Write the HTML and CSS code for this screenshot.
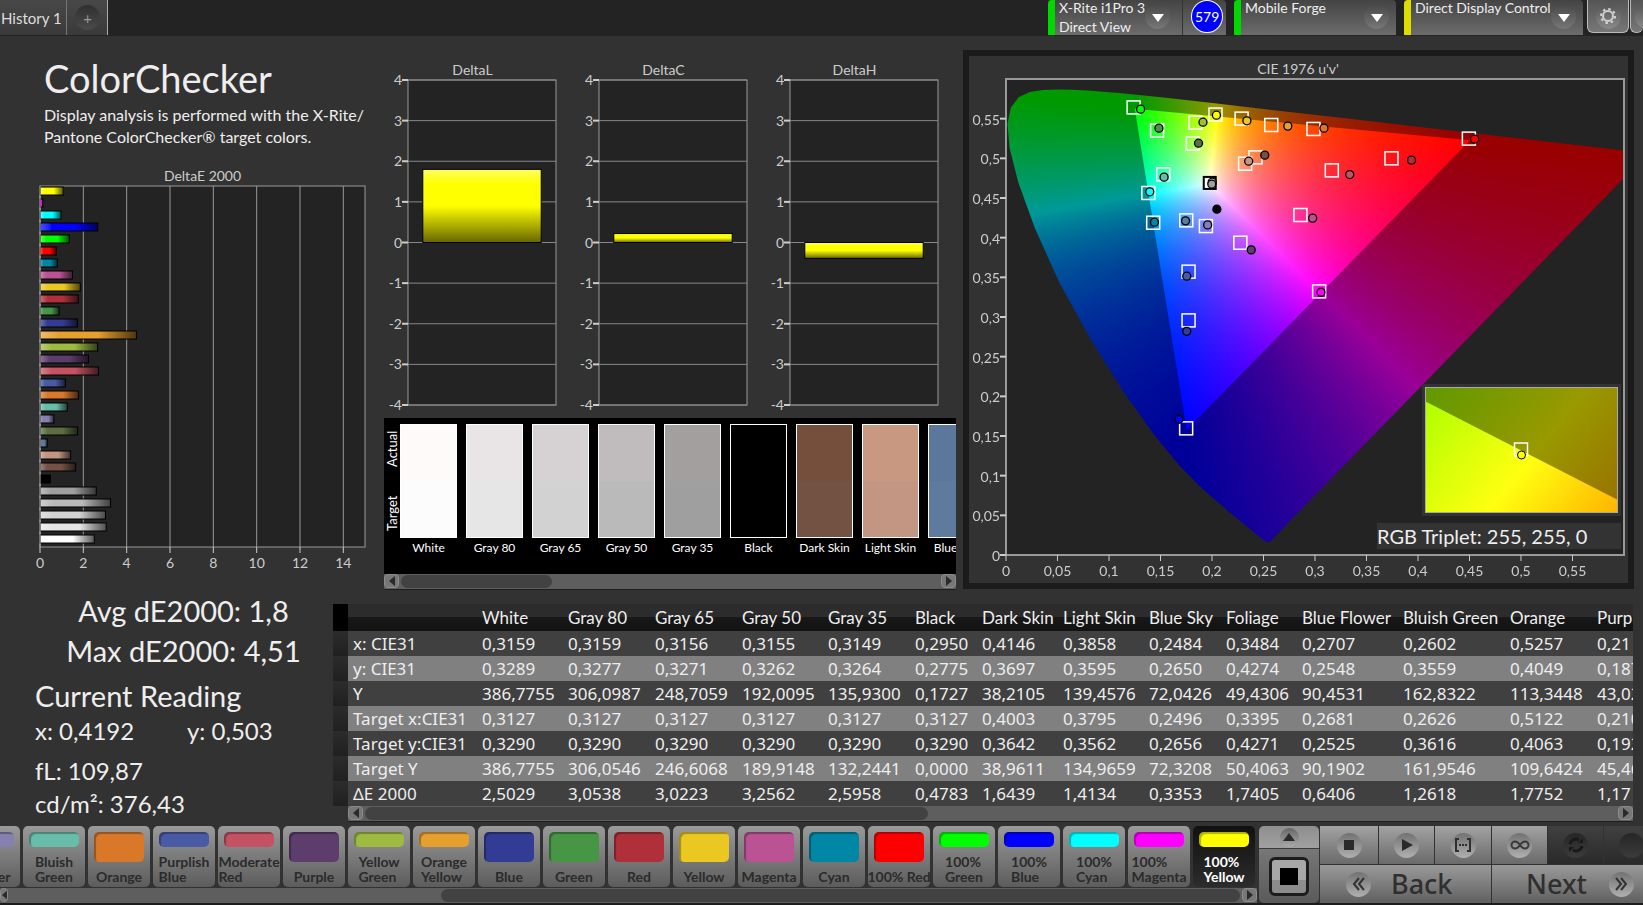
FILE: index.html
```html
<!DOCTYPE html>
<html lang="en">
<head>
    <meta charset="UTF-8">
    <meta name="viewport" content="width=device-width, initial-scale=1.0">
    <title>ColorChecker</title>
    <link rel="stylesheet" href="styles.css">
</head>
<body>

<header class="topbar">
    <nav class="tabs">
        <button class="tab">History 1</button>
        <button class="tab tab-add" aria-label="Add tab"><span class="knob">+</span></button>
    </nav>
    <div class="devices">
        <div class="device meter">
            <button class="device-name" aria-haspopup="menu">X-Rite i1Pro 3<br>Direct View</button>
            <span class="knob"><svg width="14" height="10"><path d="M1 1h12L7 9z" fill="#fff"/></svg></span>
            <div class="count-box"><span class="count">579</span></div>
        </div>
        <div class="device source">
            <select class="device-name" aria-label="Source"><option>Mobile Forge</option></select>
            <span class="knob"><svg width="14" height="10"><path d="M1 1h12L7 9z" fill="#fff"/></svg></span>
        </div>
        <div class="device display">
            <select class="device-name" aria-label="Display"><option>Direct Display Control</option></select>
            <span class="knob"><svg width="14" height="10"><path d="M1 1h12L7 9z" fill="#fff"/></svg></span>
        </div>
        <button class="tool" aria-label="Settings">
            <span class="knob">
                <svg width="18" height="18" viewBox="-9 -9 18 18">
                    <circle r="5" fill="none" stroke="#d0d0d0" stroke-width="2"/>
                    <circle r="7" fill="none" stroke="#d0d0d0" stroke-width="2" stroke-dasharray="2.6 2.9"/>
                </svg>
            </span>
        </button>
        <button class="tool tool-cut" aria-label="More"><span class="knob"></span></button>
    </div>
</header>

<main>
    <div class="charts">
        <section class="left-section">
            <h1>ColorChecker</h1>
            <p class="description">Display analysis is performed with the X-Rite/<br>Pantone ColorChecker® target colors.</p>
            <h2 class="chart-title">DeltaE 2000</h2>
            <svg class="plot delta-e" id="delta-e"></svg>
        </section>

        <section class="middle-section">
            <div class="deltas">
                <div class="delta">
                    <h2 class="chart-title">DeltaL</h2>
                    <svg class="plot delta-plot" data-value="1.8"></svg>
                </div>
                <div class="delta">
                    <h2 class="chart-title">DeltaC</h2>
                    <svg class="plot delta-plot" data-value="0.22"></svg>
                </div>
                <div class="delta">
                    <h2 class="chart-title">DeltaH</h2>
                    <svg class="plot delta-plot" data-value="-0.39"></svg>
                </div>
            </div>

            <div class="swatch-panel">
                <div class="swatches">
                    <div class="side-labels"><span>Target</span><span>Actual</span></div>
                    <div class="swatch-list" id="swatches"></div>
                </div>
                <div class="scrollbar">
                    <button class="arrow" aria-label="Scroll left"><svg width="8" height="10"><path d="M7 0v10L1 5z"/></svg></button>
                    <div class="track"><div class="thumb" style="width: 28%"></div></div>
                    <button class="arrow" aria-label="Scroll right"><svg width="8" height="10"><path d="M1 0v10L7 5z"/></svg></button>
                </div>
            </div>
        </section>

        <section class="cie-panel">
            <h2 class="chart-title">CIE 1976 u'v'</h2>
            <div class="cie-plot">
                <canvas id="cie" width="618" height="476"></canvas>
                <svg class="plot" id="cie-marks"></svg>
                <div class="inset">
                    <div class="inset-view">
                        <div class="inset-gamut"></div>
                        <svg width="100%" height="100%">
                            <svg x="50%" y="50%" overflow="visible">
                                <rect x="-7" y="-7" width="13" height="13" class="target"/>
                                <circle r="4" cy="5" fill="#ffff00" stroke="#000"/>
                            </svg>
                        </svg>
                    </div>
                </div>
                <div class="triplet">RGB Triplet: 255, 255, 0</div>
            </div>
        </section>
    </div>

    <div class="readings">
        <section class="stats">
            <div class="summary">Avg dE2000: 1,8</div>
            <div class="summary">Max dE2000: 4,51</div>
            <h2>Current Reading</h2>
            <div class="xy"><span>x: 0,4192</span><span>y: 0,503</span></div>
            <div class="luminance">fL: 109,87</div>
            <div class="candela">cd/m²: 376,43</div>
        </section>

        <section class="table-section">
            <div class="table-box">
                <table>
                    <colgroup>
                        <col style="width: 15px"><col style="width: 129px">
                        <col style="width: 86px"><col style="width: 87px"><col style="width: 87px"><col style="width: 86px">
                        <col style="width: 87px"><col style="width: 67px"><col style="width: 81px"><col style="width: 86px">
                        <col style="width: 77px"><col style="width: 76px"><col style="width: 101px"><col style="width: 107px">
                        <col style="width: 87px"><col>
                    </colgroup>
                    <thead id="table-head"></thead>
                    <tbody id="table-body"></tbody>
                </table>
            </div>
            <div class="scrollbar">
                <button class="arrow" aria-label="Scroll left"><svg width="8" height="10"><path d="M7 0v10L1 5z"/></svg></button>
                <div class="track"><div class="thumb" style="width: 45%"></div></div>
                <button class="arrow" aria-label="Scroll right"><svg width="8" height="10"><path d="M1 0v10L7 5z"/></svg></button>
            </div>
        </section>
    </div>
</main>

<footer class="bottombar">
    <div class="patches">
        <div class="patch-list" id="patches"></div>
        <div class="scrollbar">
            <button class="arrow arrow-cut" aria-label="Scroll left"><svg width="8" height="10"><path d="M7 0v10L1 5z"/></svg></button>
            <div class="track track-end"><div class="thumb" style="width: 65%"></div></div>
            <button class="arrow" aria-label="Scroll right"><svg width="8" height="10"><path d="M1 0v10L7 5z"/></svg></button>
        </div>
    </div>

    <div class="window-buttons">
        <button class="up" aria-label="Expand"><span class="knob"><svg width="12" height="8"><path d="M0 8h12L6 0z" fill="#2a2a2a"/></svg></span></button>
        <button class="window" aria-label="Pattern window"><span class="window-frame"><span class="window-dot"></span></span></button>
    </div>

    <div class="transport">
        <button aria-label="Stop"><span class="knob"><svg width="12" height="12"><path d="M1 1h10v10H1z"/></svg></span></button>
        <button aria-label="Play"><span class="knob"><svg width="12" height="14"><path d="M1 1l11 6-11 6z"/></svg></span></button>
        <button aria-label="Read series">
            <span class="knob">
                <svg width="18" height="14" fill="none" stroke="#2f2f2f" stroke-width="2">
                    <path d="M5 1H2v12h3M13 1h3v12h-3"/>
                    <path d="M5 7h9" stroke-dasharray="2 1"/>
                </svg>
            </span>
        </button>
        <button aria-label="Read continuous">
            <span class="knob">
                <svg width="20" height="10" fill="none" stroke="#3a3a3a" stroke-width="2">
                    <path d="M10 5C8 2 6.500 1.500 5 1.500a3.500 3.500 0 0 0 0 7C6.500 8.500 8 8 10 5s3.500-3.500 5-3.500a3.500 3.500 0 0 1 0 7c-1.500 0-3-.5-5-3.500z"/>
                </svg>
            </span>
        </button>
        <button class="off" aria-label="Refresh">
            <span class="knob">
                <svg width="16" height="16" fill="none" stroke="#191919" stroke-width="3">
                    <path d="M2 7a6 6 0 0 1 9-4M14 9a6 6 0 0 1-9 4"/>
                    <path d="M10 6h5V1zM6 10H1v5z" fill="#191919" stroke="none"/>
                </svg>
            </span>
        </button>
        <button class="off" aria-label="Record"><span class="knob"></span></button>
        <button class="step back">
            <span class="knob"><svg width="14" height="14" fill="none" stroke="#333" stroke-width="2"><path d="M7 1L2 7l5 6M12 1L7 7l5 6"/></svg></span>
            Back
        </button>
        <button class="step next">
            Next
            <span class="knob"><svg width="14" height="14" fill="none" stroke="#333" stroke-width="2"><path d="M2 1l5 6-5 6M7 1l5 6-5 6"/></svg></span>
        </button>
    </div>
</footer>

<script src="script.js"></script>
</body>
</html>
```

FILE: styles.css
```css
* {
    box-sizing: border-box;
}

body {
    margin: 0;
    min-height: 100vh;
    display: flex;
    flex-direction: column;
    background-color: #323232;
    color: #eee;
    font-family: Lato, "Liberation Sans", sans-serif;
    font-size: 15px;
    overflow: hidden;
}

h1, h2, p {
    margin: 0;
    font-weight: normal;
}

button, select {
    font: inherit;
    color: inherit;
    border: none;
    padding: 0;
    margin: 0;
    background: none;
    cursor: pointer;
}

.knob {
    display: flex;
    align-items: center;
    justify-content: center;
    flex: none;
    width: 25px;
    height: 25px;
    border-radius: 50%;
}

/* top bar */
.topbar {
    display: flex;
    justify-content: space-between;
    align-items: flex-start;
    height: 36px;
    background-color: #232323;
}

.tabs {
    display: flex;
    height: 35px;
}

.tab {
    width: 67px;
    padding-left: 1px;
    text-align: left;
    white-space: nowrap;
    border-right: 1px solid #777;
    background: linear-gradient(#484848, #3a3a3a);
    color: #ddd;
}

.tab-add {
    display: flex;
    align-items: center;
    justify-content: center;
    width: 41px;
    border-right-color: #aaa;
    color: #999;
}

.tab-add .knob {
    background: linear-gradient(#303030, #4a4a4a);
}

.devices {
    display: flex;
    height: 35px;
    margin-left: auto;
    flex: none;
}

.device {
    display: flex;
    align-items: flex-start;
    justify-content: space-between;
    border-left: 7px solid #00d800;
    border-radius: 4px 4px 0 0;
    background: linear-gradient(#444, #6c6c6c);
    margin-right: 8px;
    padding-left: 4px;
    font-size: 14px;
}

.device-name {
    text-align: left;
    white-space: nowrap;
    appearance: none;
    flex: 1;
}

select.device-name {
    height: 15px;
    line-height: 15px;
}

.device .knob {
    margin-top: 4px;
    background: linear-gradient(#484848, #777);
}

.device .knob svg {
    margin-top: 3px;
}

.meter {
    width: 178px;
}

.meter .device-name {
    line-height: 19px;
    margin-top: -2px;
}

.count-box {
    width: 44px;
    height: 35px;
    margin-left: 12px;
    padding: 0 8px;
    border-left: 1px solid #333;
}

.count {
    display: flex;
    align-items: center;
    justify-content: center;
    width: 32px;
    height: 33px;
    border: 1px solid #fff;
    border-radius: 50%;
    background-color: #0000ff;
    color: #fff;
}

.source {
    width: 162px;
}

.source .knob,
.display .knob {
    margin-right: 7px;
}

.display {
    width: 179px;
    margin-right: 4px;
    border-left-color: #dddd00;
}

.tool {
    display: flex;
    align-items: center;
    justify-content: center;
    width: 42px;
    height: 33px;
    border: 1px solid #bbb;
    border-radius: 0 0 6px 6px;
    border-top: none;
    background: linear-gradient(#555, #777);
}

.tool .knob {
    background: linear-gradient(#555, #8a8a8a);
}

.tool-cut {
    width: 13px;
    margin-left: 1px;
    border-right: none;
    justify-content: flex-start;
    padding-left: 4px;
    overflow: hidden;
}

/* charts */
.charts {
    display: grid;
    grid-template-columns: minmax(0, 377fr) minmax(0, 586fr) minmax(0, 671fr) minmax(0, 9fr);
    height: 555px;
    padding-top: 14px;
}

.chart-title {
    font-size: 14px;
    line-height: 20px;
    text-align: center;
    color: #ccc;
}

.plot {
    display: block;
    width: 100%;
    overflow: visible;
}

.plot text {
    font-size: 14px;
    fill: #ccc;
}

.left-section {
    padding: 2px 12px 0 40px;
}

.left-section h1 {
    padding-left: 4px;
    font-size: 38px;
    line-height: 52px;
}

.description {
    padding: 0 0 18px 4px;
    font-size: 16px;
    line-height: 22px;
    white-space: nowrap;
}

.delta-e {
    height: 361px;
}

.deltas {
    display: grid;
    grid-template-columns: repeat(3, 1fr);
    padding-right: 13px;
    margin-top: 10px;
}

.delta-plot {
    width: calc(100% - 43px);
    height: 325px;
    margin: 0 12px 0 31px;
}

.swatch-panel {
    margin: 13px 7px 0;
    background-color: #000;
}

.swatches {
    display: flex;
    height: 156px;
    padding-top: 6px;
    overflow: hidden;
}

.side-labels {
    display: flex;
    justify-content: space-between;
    writing-mode: vertical-rl;
    transform: rotate(180deg);
    width: 16px;
    height: 114px;
    padding: 7px 0;
    font-size: 13px;
    line-height: 16px;
    color: #fff;
}

.swatch-list {
    display: flex;
    flex: 1;
    overflow: hidden;
    gap: 9px;
}

.swatch {
    flex: none;
    width: 57px;
    font-size: 12px;
    line-height: 20px;
    text-align: center;
    white-space: nowrap;
    color: #fff;
}

.swatch-color {
    height: 114px;
    border: 1px solid #fff;
}

/* scrollbars */
.scrollbar {
    display: flex;
    height: 16px;
    background-color: #5e5e5e;
    border-bottom: 1px solid #1e1e1e;
}

.arrow {
    display: flex;
    align-items: center;
    justify-content: center;
    width: 15px;
    height: 14px;
    border: 1px solid #8c8c8c;
    border-radius: 4px;
    background-color: #777;
    fill: #2a2a2a;
}

.arrow-cut {
    width: 8px;
}

.track {
    flex: 1;
    display: flex;
    padding: 1px 2px;
}

.track-end {
    justify-content: flex-end;
}

.thumb {
    height: 13px;
    border-radius: 7px;
    background-color: #424242;
}

/* CIE diagram */
.cie-panel {
    border: 6px solid #1b1b1b;
    height: 539px;
    padding: 0 4px 0 37px;
}

.cie-panel .chart-title {
    padding: 3px 34px 0 0;
}

.cie-plot {
    position: relative;
    height: 476px;
    background-color: #232323;
}

.cie-plot canvas,
.cie-plot .plot {
    position: absolute;
    left: 0;
    top: 0;
    width: 100%;
    height: 100%;
}

.target {
    fill: none;
    stroke: #fff;
    stroke-width: 1.5px;
}

.inset {
    position: absolute;
    right: 3px;
    bottom: 39px;
    padding: 3px;
    width: 199px;
    height: 132px;
    background-color: #333;
}

.inset-view {
    position: relative;
    height: 126px;
    border: 1px solid #aaa;
    background: linear-gradient(130deg, #609900, #999900 55%, #997000);
}

.inset-gamut {
    position: absolute;
    inset: 0;
    background: linear-gradient(130deg, #aaff00, #ffff10 56%, #ffb400);
    clip-path: polygon(0 11%, 100% 90%, 100% 100%, 0 100%);
}

.inset-view svg {
    position: relative;
}

.triplet {
    position: absolute;
    right: 3px;
    bottom: 6px;
    width: 244px;
    font-size: 20px;
    line-height: 26px;
    background-color: #333;
}

/* readings */
.readings {
    display: flex;
    padding-right: 10px;
}

.stats {
    flex: none;
    width: 333px;
    padding-left: 35px;
    font-size: 24px;
}

.summary {
    width: 297px;
    font-size: 29px;
    line-height: 40px;
    text-align: center;
}

.stats h2 {
    font-size: 29px;
    line-height: 40px;
    margin-top: 5px;
}

.xy {
    display: flex;
    line-height: 30px;
}

.xy span:first-child {
    width: 152px;
}

.luminance {
    margin-top: 8px;
    line-height: 34px;
}

.candela {
    line-height: 32px;
}

.table-section {
    flex: 1;
    min-width: 0;
    padding-top: 13px;
}

.table-box {
    overflow: hidden;
}

table {
    width: 100%;
    table-layout: fixed;
    border-collapse: collapse;
}

th, td {
    padding: 0 0 0 5px;
    text-align: left;
    font-weight: normal;
    white-space: nowrap;
    overflow: hidden;
}

thead th {
    height: 27px;
    font-size: 17px;
    line-height: 27px;
    background: linear-gradient(#2c2c2c 50%, #181818 50%, #121212);
}

thead th:first-child {
    background: #000;
}

tbody th, tbody td {
    height: 25px;
    line-height: 25px;
    font-family: "Noto Sans", "Open Sans", sans-serif;
    font-size: 17px;
    background-color: #404040;
}

tbody tr:nth-child(even) th,
tbody tr:nth-child(even) td {
    background-color: #808080;
}

tbody tr td:first-child,
tbody tr:nth-child(even) td:first-child {
    background: linear-gradient(#2c2c2c, #202020);
}

.table-section .scrollbar {
    margin-left: 15px;
}

/* bottom bar */
.bottombar {
    display: flex;
    margin-top: 4px;
    height: 79px;
    border-bottom: 2px solid #1c1c1c;
}

.patches {
    flex: 1;
    min-width: 0;
}

.patch-list {
    display: flex;
    justify-content: flex-end;
    gap: 3px;
    padding-right: 2px;
    height: 62px;
    overflow: hidden;
}

.patch {
    flex: none;
    display: flex;
    flex-direction: column;
    align-items: center;
    justify-content: space-between;
    width: 62px;
    height: 61px;
    padding: 6px 0 3px;
    border-radius: 5px;
    background: linear-gradient(#9a9a9a, #5c5c5c);
    color: #2b2b2b;
    font-size: 14px;
    font-weight: bold;
    line-height: 15px;
    text-align: left;
    white-space: nowrap;
}

.patch.active {
    background: linear-gradient(#111, #2c2c2c);
    color: #fff;
}

.patch-color {
    width: 50px;
    height: 30px;
    border-radius: 5px;
    box-shadow: inset 2px 2px 1px rgba(0, 0, 0, 0.3);
}

.patch-color.short {
    height: 15px;
}

.window-buttons {
    display: flex;
    flex-direction: column;
    width: 60px;
    margin: 0 1px 0 2px;
    border-radius: 5px;
    overflow: hidden;
}

.up {
    display: flex;
    justify-content: center;
    align-items: center;
    height: 23px;
    background: linear-gradient(#8f8f8f, #a0a0a0);
    border-bottom: 1px solid #3a3a3a;
}

.up .knob {
    width: 19px;
    height: 19px;
    background: linear-gradient(#666, #aaa);
}

.window {
    display: flex;
    justify-content: center;
    align-items: center;
    flex: 1;
    background: linear-gradient(#777, #5a5a5a);
}

.window-frame {
    display: flex;
    justify-content: center;
    align-items: center;
    width: 40px;
    height: 39px;
    border: 3px solid #1c1c1c;
    border-radius: 6px;
    background: linear-gradient(#a8a8a8 60%, #8c8c8c 60%);
}

.window-dot {
    width: 18px;
    height: 17px;
    background-color: #000;
}

.transport {
    display: grid;
    grid-template-columns: 58px 55px 56px 55px 55px 55px;
    grid-template-rows: 38px 38px;
    gap: 1px;
    width: 323px;
    overflow: hidden;
}

.transport button {
    display: flex;
    justify-content: center;
    align-items: center;
    background: linear-gradient(#a2a2a2, #6a6a6a);
}

.transport .knob {
    background: linear-gradient(#727272, #b0b0b0);
    fill: #2a2a2a;
}

.transport .off {
    background: linear-gradient(#404040, #2a2a2a);
}

.transport .off .knob {
    background: linear-gradient(#262626, #3c3c3c);
}

.transport .step {
    grid-column: span 3;
    justify-content: flex-start;
    font-family: "Noto Sans", "Open Sans", sans-serif;
    font-size: 27px;
    font-weight: 500;
    line-height: 36px;
    color: #2f2f2f;
    background: linear-gradient(#9a9a9a, #606060);
}

.transport .back {
    gap: 20px;
    padding-left: 26px;
}

.transport .next {
    gap: 22px;
    padding-left: 34px;
}
```

FILE: script.js
```js
// name, dE2000, button colour, actual, target
const patches = [
    ["White", 2.5029, "#ffffff", "#fffafa", "#fcfcfc"],
    ["Gray 80", 3.0538, "#e6e6e6", "#e9e5e6", "#e6e6e6"],
    ["Gray 65", 3.0223, "#d2d2d2", "#d6d2d3", "#d2d2d2"],
    ["Gray 50", 3.2562, "#bababa", "#c0bbbc", "#bababa"],
    ["Gray 35", 2.5958, "#9f9f9f", "#a39f9f", "#9f9f9f"],
    ["Black", 0.4783, "#000000", "#000000", "#000000"],
    ["Dark Skin", 1.6439, "#735244", "#764f3c", "#735244"],
    ["Light Skin", 1.4134, "#c29682", "#c89880", "#c29682"],
    ["Blue Sky", 0.3353, "#5e7a9c", "#5b789c", "#5e7a9c"],
    ["Foliage", 1.7405, "#5b6f43"],
    ["Blue Flower", 0.6406, "#8580b1"],
    ["Bluish Green", 1.2618, "#67bdaa"],
    ["Orange", 1.7752, "#d97829"],
    ["Purplish Blue", 1.17, "#4a5ba5"],
    ["Moderate Red", 2.7, "#c45262"],
    ["Purple", 2.24, "#5d3d6c"],
    ["Yellow Green", 2.66, "#9fba41"],
    ["Orange Yellow", 4.45, "#e6a02d"],
    ["Blue", 1.73, "#333c94"],
    ["Green", 0.88, "#469646"],
    ["Red", 1.77, "#b03039"],
    ["Yellow", 1.86, "#ebc722"],
    ["Magenta", 1.5, "#bb5293"],
    ["Cyan", 0.8, "#0087a5"],
    ["100% Red", 0.75, "#ff0000"],
    ["100% Green", 1.35, "#00ff00"],
    ["100% Blue", 2.67, "#0000ff"],
    ["100% Cyan", 0.97, "#00ffff"],
    ["100% Magenta", 0.13, "#ff00ff"],
    ["100% Yellow", 1.07, "#ffff00"]
];

const rows = [
    ["x: CIE31", "0,3159", "0,3159", "0,3156", "0,3155", "0,3149", "0,2950", "0,4146", "0,3858", "0,2484", "0,3484", "0,2707", "0,2602", "0,5257", "0,21"],
    ["y: CIE31", "0,3289", "0,3277", "0,3271", "0,3262", "0,3264", "0,2775", "0,3697", "0,3595", "0,2650", "0,4274", "0,2548", "0,3559", "0,4049", "0,187"],
    ["Y", "386,7755", "306,0987", "248,7059", "192,0095", "135,9300", "0,1727", "38,2105", "139,4576", "72,0426", "49,4306", "90,4531", "162,8322", "113,3448", "43,02"],
    ["Target x:CIE31", "0,3127", "0,3127", "0,3127", "0,3127", "0,3127", "0,3127", "0,4003", "0,3795", "0,2496", "0,3395", "0,2681", "0,2626", "0,5122", "0,210"],
    ["Target y:CIE31", "0,3290", "0,3290", "0,3290", "0,3290", "0,3290", "0,3290", "0,3642", "0,3562", "0,2656", "0,4271", "0,2525", "0,3616", "0,4063", "0,192"],
    ["Target Y", "386,7755", "306,0546", "246,6068", "189,9148", "132,2441", "0,0000", "38,9611", "134,9659", "72,3208", "50,4063", "90,1902", "161,9546", "109,6424", "45,46"],
    ["ΔE 2000", "2,5029", "3,0538", "3,0223", "3,2562", "2,5958", "0,4783", "1,6439", "1,4134", "0,3353", "1,7405", "0,6406", "1,2618", "1,7752", "1,17"]
];

// target u', v'
const targets = [
    [0.1244, 0.5635], [0.1472, 0.5343], [0.1844, 0.5444], [0.1819, 0.5179], [0.2039, 0.5545],
    [0.2292, 0.5494], [0.2580, 0.5414], [0.2990, 0.5364], [0.4499, 0.5242], [0.3747, 0.4994],
    [0.3168, 0.4842], [0.2427, 0.5006], [0.2326, 0.4926], [0.1531, 0.4792], [0.1387, 0.4557],
    [0.1434, 0.4182], [0.1755, 0.4212], [0.1946, 0.4140], [0.2280, 0.3930], [0.2863, 0.4279],
    [0.3045, 0.3317], [0.1777, 0.3565], [0.1777, 0.2951], [0.1754, 0.1590]
];

// measured u', v', colour
const measured = [
    [0.1307, 0.5620, "#00ff00"], [0.1485, 0.5380, "#469646"], [0.1912, 0.5456, "#9fba41"],
    [0.1869, 0.5191, "#5b6f43"], [0.2043, 0.5544, "#ffff00"], [0.2339, 0.5473, "#ebc722"],
    [0.2736, 0.5406, "#e6a02d"], [0.3087, 0.5380, "#d97829"], [0.4550, 0.5242, "#ff0000"],
    [0.3937, 0.4977, "#b03039"], [0.3337, 0.4796, "#c45262"], [0.2512, 0.5040, "#735244"],
    [0.2356, 0.4964, "#c29682"], [0.2002, 0.4700, "#cccccc"], [0.1998, 0.4676, "#9f9f9f"],
    [0.1535, 0.4763, "#67bdaa"], [0.1396, 0.4578, "#00ffff"], [0.1442, 0.4195, "#0087a5"],
    [0.1743, 0.4212, "#5e7a9c"], [0.1958, 0.4161, "#8580b1"], [0.2047, 0.4359, "#000000"],
    [0.2381, 0.3846, "#5d3d6c"], [0.2977, 0.4246, "#bb5293"], [0.3058, 0.3312, "#ff00ff"],
    [0.1755, 0.3514, "#4a5ba5"], [0.1755, 0.2820, "#333c94"], [0.1679, 0.1711, "#0000ff"]
];

// spectral locus, x and y
const locus = [
    [0.1733, 0.0048], [0.1714, 0.0051], [0.1689, 0.0069], [0.1644, 0.0109], [0.1566, 0.0177],
    [0.1440, 0.0297], [0.1355, 0.0399], [0.1241, 0.0578], [0.1096, 0.0868], [0.0913, 0.1327],
    [0.0687, 0.2007], [0.0454, 0.2950], [0.0235, 0.4127], [0.0082, 0.5384], [0.0039, 0.6548],
    [0.0139, 0.7502], [0.0389, 0.8120], [0.0743, 0.8338], [0.1142, 0.8262], [0.1547, 0.8059],
    [0.1929, 0.7816], [0.2296, 0.7543], [0.3016, 0.6923], [0.3731, 0.6245], [0.4441, 0.5547],
    [0.5125, 0.4866], [0.5752, 0.4242], [0.6270, 0.3725], [0.6658, 0.3340], [0.6915, 0.3083],
    [0.7190, 0.2809], [0.7347, 0.2653]
];

function pct(n) {
    return n.toFixed(2) + "%";
}

function drawDeltaE() {
    let out = '<rect width="100%" height="100%" fill="#232323" stroke="#999"/><defs>';
    patches.forEach((p, i) => {
        out += `<linearGradient id="g${i}">
            <stop offset="0" stop-color="color-mix(in srgb, ${p[2]} 70%, white)"/>
            <stop offset="0.2" stop-color="${p[2]}"/><stop offset="0.6" stop-color="${p[2]}"/>
            <stop offset="1" stop-color="color-mix(in srgb, ${p[2]} 35%, black)"/></linearGradient>`;
    });
    out += '</defs>';
    for (let n = 0; n < 15; n += 2) {
        const x = pct(n / 15 * 100);
        out += `<line x1="${x}" x2="${x}" y1="0" y2="100%" stroke="#999"/>
            <svg x="${x}" y="100%" overflow="visible"><path d="M0 0v6" stroke="#ccc"/>
            <text y="21" text-anchor="middle">${n}</text></svg>`;
    }
    patches.slice().reverse().forEach((p, i) => {
        const id = patches.length - 1 - i;
        out += `<rect x="0" y="${pct((i * 12 + 1) / 361 * 100)}" width="${pct(p[1] / 15 * 100)}"
            height="8" fill="url(#g${id})" stroke="#000"/>`;
    });
    out += '<line x1="0" x2="0" y1="0" y2="100%" stroke="#999"/>';
    document.getElementById("delta-e").innerHTML = out;
}

function drawDelta(svg) {
    const value = Number(svg.dataset.value);
    let out = `<defs><linearGradient id="yellow" x2="0" y2="1">
        <stop offset="0" stop-color="#ffff60"/><stop offset="0.2" stop-color="#ffff00"/>
        <stop offset="0.5" stop-color="#ffff00"/><stop offset="1" stop-color="#666600"/>
        </linearGradient></defs><rect width="100%" height="100%" fill="#232323" stroke="#999"/>`;
    for (let n = -4; n <= 4; n++) {
        const y = pct((4 - n) / 8 * 100);
        out += `<line x1="0" x2="100%" y1="${y}" y2="${y}" stroke="#888"/>
            <svg x="0" y="${y}" overflow="visible"><path d="M-6 0h6" stroke="#ccc" stroke-width="2"/>
            <text x="-6" y="5" text-anchor="end">${n}</text></svg>`;
    }
    out += `<rect x="10%" width="80%" y="${pct((4 - Math.max(value, 0)) / 8 * 100)}"
        height="${pct(Math.abs(value) / 8 * 100)}" fill="url(#yellow)" stroke="#000"/>`;
    svg.innerHTML = out;
}

function drawSwatches() {
    document.getElementById("swatches").innerHTML = patches.slice(0, 9).map(p =>
        `<div class="swatch"><div class="swatch-color"
        style="background: linear-gradient(${p[3]} 50%, ${p[4]} 50%)"></div>${p[0]}</div>`
    ).join("");
}

function drawTable() {
    const names = patches.slice(0, 13).map(p => p[0]).concat("Purp");
    document.getElementById("table-head").innerHTML =
        `<tr><th></th><th></th>${names.map(n => `<th>${n}</th>`).join("")}</tr>`;
    document.getElementById("table-body").innerHTML = rows.map(r =>
        `<tr><td></td><th>${r[0]}</th>${r.slice(1).map(v => `<td>${v}</td>`).join("")}</tr>`
    ).join("");
}

function drawPatches() {
    document.getElementById("patches").innerHTML = patches.slice(10).map((p, i) => {
        const twoLines = p[0].includes(" ") && p[0] !== "100% Red";
        const label = twoLines ? p[0].replace(" ", "<br>") : p[0];
        return `<button class="patch${i === 19 ? " active" : ""}">
            <span class="patch-color${twoLines ? " short" : ""}" style="background-color: ${p[2]}"></span>
            <span>${label}</span></button>`;
    }).join("");
}

// linear RGB, scaled so that the strongest channel is full
function uvToRgb(u, v) {
    const d = 6 * u - 16 * v + 12;
    const x = 9 * u / d;
    const y = 4 * v / d;
    const z = 1 - x - y;
    const rgb = [
        3.2406 * x - 1.5372 * y - 0.4986 * z,
        -0.9689 * x + 1.8758 * y + 0.0415 * z,
        0.0557 * x - 0.2040 * y + 1.0570 * z
    ].map(c => Math.max(c, 0));
    const max = Math.max(...rgb);
    return rgb.map(c => c / max * 255);
}

function drawCie() {
    const canvas = document.getElementById("cie");
    const ctx = canvas.getContext("2d");
    const w = canvas.width;
    const h = canvas.height;

    function layer(level) {
        const c = document.createElement("canvas");
        c.width = w;
        c.height = h;
        const cx = c.getContext("2d");
        const img = cx.createImageData(w, h);
        for (let py = 0; py < h; py++) {
            for (let px = 0; px < w; px++) {
                const rgb = uvToRgb(px / w * 0.6, (h - py) / h * 0.6);
                const i = (py * w + px) * 4;
                img.data[i] = rgb[0] * level;
                img.data[i + 1] = rgb[1] * level;
                img.data[i + 2] = rgb[2] * level;
                img.data[i + 3] = 255;
            }
        }
        cx.putImageData(img, 0, 0);
        return c;
    }

    function fillShape(points, image) {
        ctx.beginPath();
        points.forEach(p => ctx.lineTo(p[0] / 0.6 * w, h - p[1] / 0.6 * h));
        ctx.closePath();
        ctx.fillStyle = ctx.createPattern(image, "no-repeat");
        ctx.fill();
    }

    const shape = locus.map(p => {
        const d = -2 * p[0] + 12 * p[1] + 3;
        return [4 * p[0] / d, 9 * p[1] / d];
    });
    fillShape(shape, layer(0.6));
    fillShape([[0.4507, 0.5229], [0.125, 0.5625], [0.1754, 0.1579]], layer(1));
}

function drawCieMarks() {
    let out = '<rect width="100%" height="100%" fill="none" stroke="#999" stroke-width="2"/>';
    for (let i = 0; i < 12; i++) {
        const label = String(i * 5 / 100).replace(".", ",");
        out += `<svg x="${pct(i / 12 * 100)}" y="100%" overflow="visible"><path d="M0 0v6" stroke="#ccc"/>
            <text y="21" text-anchor="middle">${label}</text></svg>
            <svg x="0" y="${pct(100 - i / 12 * 100)}" overflow="visible"><path d="M-6 0h6" stroke="#ccc" stroke-width="2"/>
            <text x="-6" y="6" text-anchor="end">${label}</text></svg>`;
    }
    targets.forEach(t => {
        out += `<svg x="${pct(t[0] / 0.6 * 100)}" y="${pct(100 - t[1] / 0.6 * 100)}" overflow="visible">
            <rect x="-7" y="-7" width="13" height="13" class="target"/></svg>`;
    });
    out += `<svg x="${pct(0.1978 / 0.6 * 100)}" y="${pct(100 - 0.469 / 0.6 * 100)}" overflow="visible">
        <rect x="-6" y="-6" width="12" height="12" fill="#fff" stroke="#000" stroke-width="2"/></svg>`;
    measured.forEach(m => {
        out += `<circle cx="${pct(m[0] / 0.6 * 100)}" cy="${pct(100 - m[1] / 0.6 * 100)}" r="4"
            fill="${m[2]}" stroke="#000" stroke-width="1.3"/>`;
    });
    document.getElementById("cie-marks").innerHTML = out;
}

drawDeltaE();
document.querySelectorAll(".delta-plot").forEach(drawDelta);
drawSwatches();
drawTable();
drawPatches();
drawCie();
drawCieMarks();
```
